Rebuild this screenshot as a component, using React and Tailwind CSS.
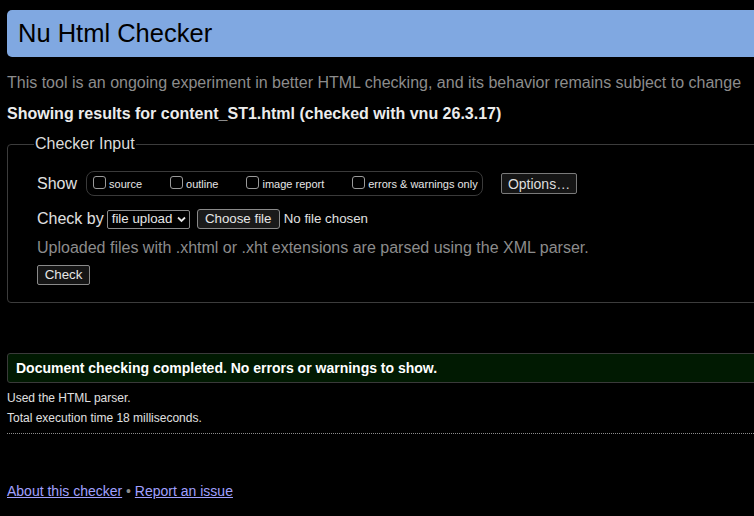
import React from "react";

const Box = ({ label }) => (
  <label className="flex items-end gap-[3px]">
    <span className="mb-[2px] block h-[13px] w-[13px] rounded-[3px] border border-[#9a9a9a] bg-black"></span>
    <span className="text-[11px] leading-[14px] text-[#e6e6e6]">{label}</span>
  </label>
);

const App = () => {
  return (
    <div className="h-[516px] w-[754px] overflow-hidden bg-black font-['Liberation_Sans',Arial,sans-serif]">
      <div className="w-[820px] pl-[7px] pt-[10px]">
        {/* Header */}
        <h1 className="flex h-[47px] items-center rounded-[5px] bg-[#80a8e1] pl-[11px] text-[25.5px] leading-none text-black">
          Nu Html Checker
        </h1>

        <p className="mt-[17px] text-[16px] leading-[18px] text-[#8c8c8c]">
          This tool is an ongoing experiment in better HTML checking, and its behavior remains subject to change
        </p>
        <p className="mt-[13px] text-[16px] font-bold leading-[18px] text-[#ececec]">
          Showing results for content_ST1.html (checked with vnu 26.3.17)
        </p>

        {/* Checker input */}
        <fieldset className="mt-[12px] rounded-[4px] border border-[#3c3c3c] pb-[16px] pl-[29px]">
          <legend className="-ml-[3px] px-[1px] text-[16px] leading-[18px] text-[#dcdcdc]">
            Checker Input
          </legend>

          <div className="mt-[18px] flex items-center">
            <span className="text-[16px] leading-[18px] text-[#e0e0e0]">Show</span>
            <div className="ml-[9px] flex h-[25px] w-[397px] items-center gap-[28px] rounded-[8px] border border-[#3a3a3a] pl-[6px]">
              <Box label="source" />
              <Box label="outline" />
              <Box label="image report" />
              <Box label="errors & warnings only" />
            </div>
            <button className="ml-[18px] h-[21px] w-[76px] rounded-[2px] border border-[#7a7a7a] bg-[#151515] text-[14px] leading-none text-[#dedede]">
              Options…
            </button>
          </div>

          <div className="mt-[13px] flex items-center">
            <span className="text-[16px] leading-[18px] text-[#e0e0e0]">Check by</span>
            <div className="ml-[3px] flex h-[19px] w-[83px] items-center justify-between rounded-[2px] border border-[#8a8a8a] bg-black pl-[4px] pr-[3px] text-[13.3px] text-[#e6e6e6]">
              <span>file upload</span>
              <svg width="9" height="7" viewBox="0 0 9 7">
                <path d="M1 1.5 L4.5 5 L8 1.5" fill="none" stroke="#e6e6e6" strokeWidth="1.8" />
              </svg>
            </div>
            <button className="ml-[7px] h-[20px] w-[83px] rounded-[3px] border border-[#8a8a8a] bg-[#1a1a1a] text-[13.3px] leading-none text-[#e6e6e6]">
              Choose file
            </button>
            <span className="ml-[4px] text-[13.3px] text-[#e0e0e0]">No file chosen</span>
          </div>

          <p className="mt-[10px] text-[16px] leading-[18px] text-[#8c8c8c]">
            Uploaded files with .xhtml or .xht extensions are parsed using the XML parser.
          </p>

          <button className="mt-[8px] h-[20px] w-[53px] rounded-[2px] border border-[#8a8a8a] bg-[#151515] text-[13.3px] leading-none text-[#e6e6e6]">
            Check
          </button>
        </fieldset>

        {/* Result */}
        <div className="mt-[50px] flex h-[30px] items-center rounded-l-[3px] border border-[#3a3a3a] bg-[#011a02] pl-[8px] text-[14px] font-bold text-white">
          Document checking completed. No errors or warnings to show.
        </div>

        <p className="mt-[8px] text-[12px] leading-[14px] text-[#e0e0e0]">Used the HTML parser.</p>
        <p className="mt-[6px] text-[12px] leading-[14px] text-[#e0e0e0]">
          Total execution time 18 milliseconds.
        </p>
        <div className="mt-[8px] border-t border-dotted border-[#8c8c8c]"></div>

        <p className="mt-[49px] text-[14px] leading-[16px] text-[#8c8c8c]">
          <a href="#" className="text-[#a0a0ff] underline">About this checker</a>
          {" • "}
          <a href="#" className="text-[#a0a0ff] underline">Report an issue</a>
        </p>
      </div>
    </div>
  );
};

export default App;
